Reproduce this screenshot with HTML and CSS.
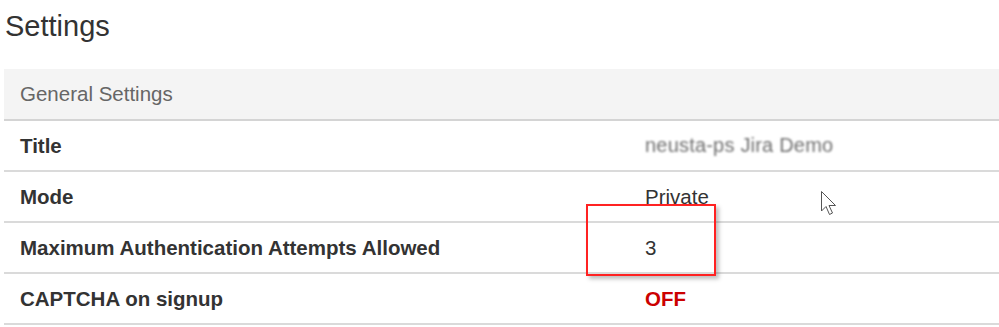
FILE: index.html
```html
<!DOCTYPE html>
<html>
<head>
<meta charset="utf-8">
<link rel="stylesheet" href="styles.css">
</head>
<body>
<h1 class="page-title">Settings</h1>
<section class="panel">
  <div class="panel-head">General Settings</div>
  <div class="row">
    <div class="label">Title</div>
    <div class="value blurred">neusta-ps Jira Demo</div>
  </div>
  <div class="row">
    <div class="label">Mode</div>
    <div class="value">Private</div>
  </div>
  <div class="row">
    <div class="label">Maximum Authentication Attempts Allowed</div>
    <div class="value">3</div>
  </div>
  <div class="row">
    <div class="label">CAPTCHA on signup</div>
    <div class="value off">OFF</div>
  </div>
  <div class="highlight"></div>
  <svg class="cursor" width="20" height="28" viewBox="0 0 20 28">
    <path d="M1.5 1.5 L1.5 21 L6 16.5 L9.5 24.5 L12.5 23 L9 15.5 L15.5 15.5 Z" fill="#fff" stroke="#555" stroke-width="1" stroke-linejoin="miter"/>
  </svg>
</section>
</body>
</html>
```
FILE: styles.css
```css
html, body {
  margin: 0;
  padding: 0;
  background: #fff;
}
body {
  font-family: "Liberation Sans", Arial, sans-serif;
  color: #333;
  width: 999px;
  height: 327px;
  overflow: hidden;
}
.page-title {
  margin: 0;
  padding: 9px 0 0 5px;
  height: 69px;
  box-sizing: border-box;
  font-size: 29px;
  line-height: 34px;
  font-weight: normal;
  color: #333;
}
.panel {
  position: relative;
  margin-left: 4px;
}
.panel-head {
  height: 50px;
  background: #f4f4f4;
  border-bottom: 2px solid #d4d4d4;
  padding-left: 16px;
  display: flex;
  align-items: center;
  font-size: 20.5px;
  color: #666;
}
.row {
  display: grid;
  grid-template-columns: 641px 1fr;
  height: 49px;
  border-bottom: 2px solid #dadada;
  align-items: center;
  font-size: 20.5px;
}
.label {
  padding-left: 16px;
  font-weight: bold;
  color: #333;
}
.value {
  color: #333;
}
.blurred {
  color: #6f6f6f;
  font-size: 20px;
  letter-spacing: 0.2px;
  filter: blur(1.2px);
}
.off {
  color: #c00;
  font-weight: bold;
}
.highlight {
  position: absolute;
  left: 582px;
  top: 135px;
  width: 126px;
  height: 68px;
  border: 2px solid #f22;
  box-shadow: 3px 3px 4px rgba(0,0,0,0.25);
}
.cursor {
  position: absolute;
  left: 816px;
  top: 121px;
}
```
